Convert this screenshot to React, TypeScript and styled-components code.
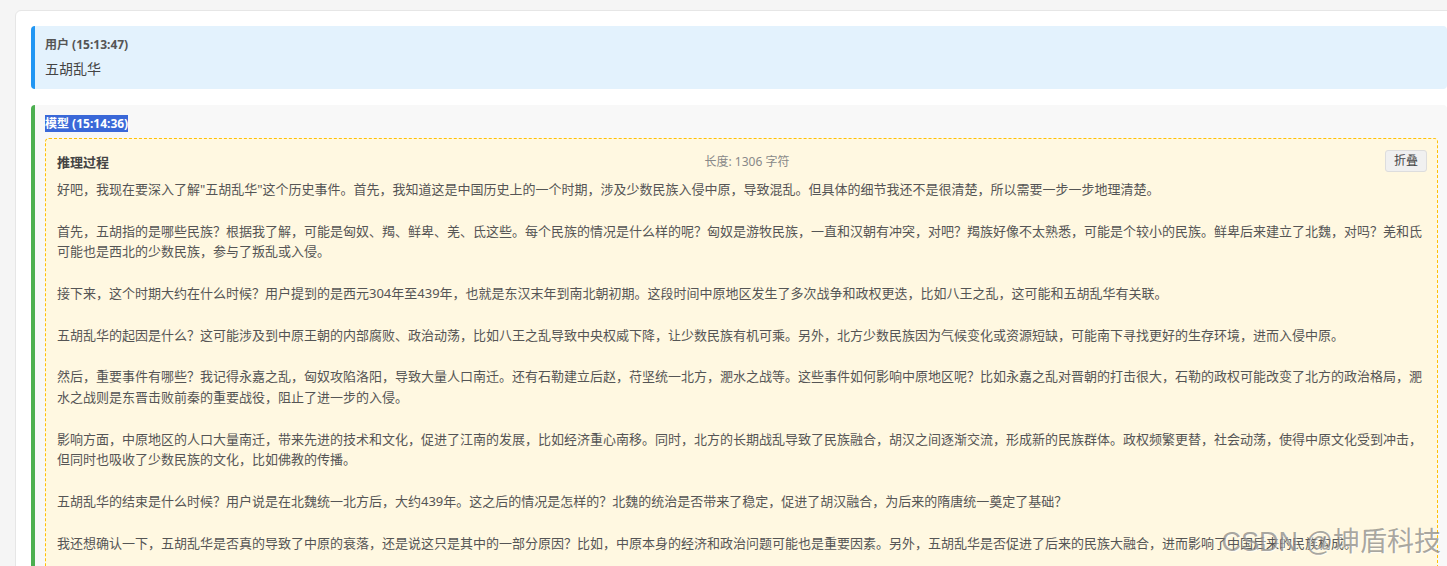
import React from "react";
import styled, { createGlobalStyle } from "styled-components";

const GlobalStyle = createGlobalStyle`
    *, *::before, *::after {
        box-sizing: border-box;
    }
    html, body {
        margin: 0;
        padding: 0;
        background: #f5f5f5;
        overflow: hidden;
        font-family: "Noto Sans", "Noto Sans CJK SC", sans-serif;
    }
`;

const Page = styled.div`
    padding: 10px 0 0 15px;
    height: 566px;
    overflow: hidden;
    position: relative;
`;

const Card = styled.div`
    width: 1448px;
    background: #fff;
    border: 1px solid #e6e6e6;
    border-radius: 6px;
    padding: 15px;
    display: flex;
    flex-direction: column;
    gap: 16px;
`;

const Message = styled.div<{ role: "user" | "model" }>`
    background: ${({ role }) => (role === "user" ? "#e3f2fd" : "#f8f8f8")};
    border-left: 4px solid ${({ role }) => (role === "user" ? "#2196f3" : "#4caf50")};
    border-radius: 4px;
    padding: 10px 9px 10px 10px;
`;

const Label = styled.div`
    font-size: 12px;
    line-height: 18px;
    font-weight: bold;
    color: #555;
    margin-bottom: 5px;
`;

const Selected = styled.span`
    background: #3a68d8;
    color: #fff;
`;

const Content = styled.div`
    font-size: 14px;
    line-height: 20px;
    color: #444;
`;

const Reasoning = styled.div`
    background: #fff8e1;
    border: 1px dashed #ffc107;
    border-radius: 4px;
    padding: 11px 10px 12px 11px;
`;

const ReasoningHeader = styled.div`
    display: flex;
    justify-content: space-between;
    align-items: center;
    margin-bottom: 7px;
`;

const ReasoningTitle = styled.span`
    font-size: 13px;
    font-weight: bold;
    color: #444;
`;

const Length = styled.span`
    font-size: 12px;
    color: #888;
`;

const FoldButton = styled.button`
    font-family: inherit;
    font-size: 12px;
    line-height: 18px;
    color: #444;
    background: #f0f0f0;
    border: 1px solid #ddd;
    border-radius: 3px;
    padding: 1px 8px;
    cursor: pointer;
`;

const ReasoningText = styled.div`
    white-space: pre-wrap;
    font-size: 13px;
    line-height: 1.6;
    color: #555;
`;

const Watermark = styled.div`
    position: absolute;
    right: 6px;
    bottom: 6px;
    font-size: 27px;
    line-height: 36px;
    color: rgba(110, 110, 110, 0.6);
    text-shadow: 1px 1px 1px rgba(255, 255, 255, 0.6);
    font-family: "Liberation Sans", "Noto Sans CJK SC", sans-serif;
    pointer-events: none;
`;

const reasoning = [
    "好吧，我现在要深入了解\"五胡乱华\"这个历史事件。首先，我知道这是中国历史上的一个时期，涉及少数民族入侵中原，导致混乱。但具体的细节我还不是很清楚，所以需要一步一步地理清楚。",
    "首先，五胡指的是哪些民族？根据我了解，可能是匈奴、羯、鲜卑、羌、氐这些。每个民族的情况是什么样的呢？匈奴是游牧民族，一直和汉朝有冲突，对吧？羯族好像不太熟悉，可能是个较小的民族。鲜卑后来建立了北魏，对吗？羌和氐可能也是西北的少数民族，参与了叛乱或入侵。",
    "接下来，这个时期大约在什么时候？用户提到的是西元304年至439年，也就是东汉末年到南北朝初期。这段时间中原地区发生了多次战争和政权更迭，比如八王之乱，这可能和五胡乱华有关联。",
    "五胡乱华的起因是什么？这可能涉及到中原王朝的内部腐败、政治动荡，比如八王之乱导致中央权威下降，让少数民族有机可乘。另外，北方少数民族因为气候变化或资源短缺，可能南下寻找更好的生存环境，进而入侵中原。",
    "然后，重要事件有哪些？我记得永嘉之乱，匈奴攻陷洛阳，导致大量人口南迁。还有石勒建立后赵，苻坚统一北方，淝水之战等。这些事件如何影响中原地区呢？比如永嘉之乱对晋朝的打击很大，石勒的政权可能改变了北方的政治格局，淝水之战则是东晋击败前秦的重要战役，阻止了进一步的入侵。",
    "影响方面，中原地区的人口大量南迁，带来先进的技术和文化，促进了江南的发展，比如经济重心南移。同时，北方的长期战乱导致了民族融合，胡汉之间逐渐交流，形成新的民族群体。政权频繁更替，社会动荡，使得中原文化受到冲击，但同时也吸收了少数民族的文化，比如佛教的传播。",
    "五胡乱华的结束是什么时候？用户说是在北魏统一北方后，大约439年。这之后的情况是怎样的？北魏的统治是否带来了稳定，促进了胡汉融合，为后来的隋唐统一奠定了基础？",
    "我还想确认一下，五胡乱华是否真的导致了中原的衰落，还是说这只是其中的一部分原因？比如，中原本身的经济和政治问题可能也是重要因素。另外，五胡乱华是否促进了后来的民族大融合，进而影响了中国后来的民族构成。",
    "总结一下，五胡乱华是西晋末年到北魏统一北方之间的一段动荡时期，少数民族政权相继建立，中原人口南迁，民族融合加深。",
].join("\n\n");

const App: React.FC = () => {
    return (
        <Page>
            <GlobalStyle />
            <Card>
                <Message role="user">
                    <Label>用户 (15:13:47)</Label>
                    <Content>五胡乱华</Content>
                </Message>
                <Message role="model">
                    <Label>
                        <Selected>模型 (15:14:36)</Selected>
                    </Label>
                    <Reasoning>
                        <ReasoningHeader>
                            <ReasoningTitle>推理过程</ReasoningTitle>
                            <Length>长度: 1306 字符</Length>
                            <FoldButton>折叠</FoldButton>
                        </ReasoningHeader>
                        <ReasoningText>{reasoning}</ReasoningText>
                    </Reasoning>
                </Message>
            </Card>
            <Watermark>CSDN @坤盾科技</Watermark>
        </Page>
    );
};

export default App;
